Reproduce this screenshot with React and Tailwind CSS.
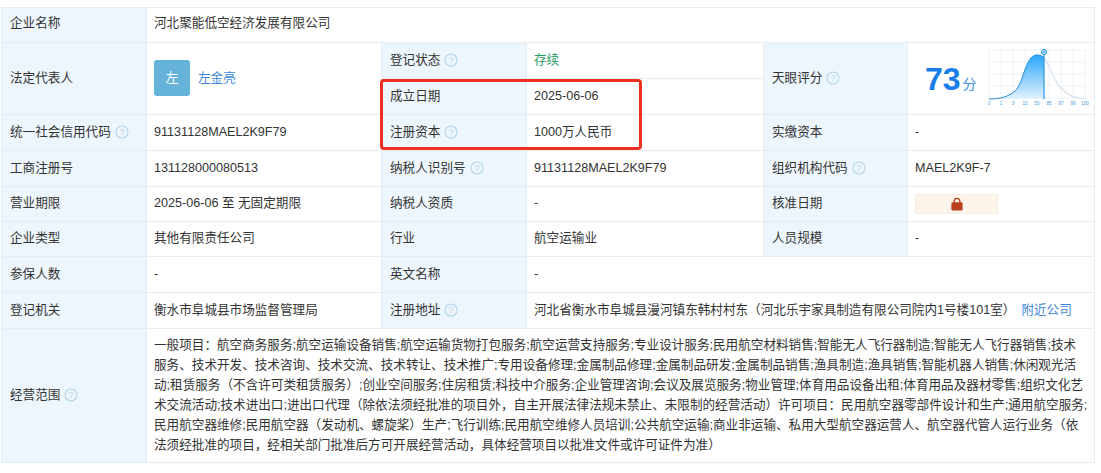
import React from 'react';

const FONT = "font-['Liberation_Sans','Noto_Sans_CJK_SC',sans-serif]";

const Help = () => (
  <svg viewBox="0 0 14 14" className="inline-block w-[14px] h-[14px] ml-[4px] align-[-3px]">
    <circle cx="7" cy="7" r="6" fill="none" stroke="#b5d5ea" strokeWidth="1.1" />
    <text x="7" y="10.2" textAnchor="middle" fontSize="9" fill="#b5d5ea" fontFamily="Liberation Sans">?</text>
  </svg>
);

const Label = ({ children, help, rowSpan, className }) => (
  <td rowSpan={rowSpan} className={`bg-[#edf6fc] border border-[#e4edf3] pl-[8px] pr-1 ${className || 'pb-[2px]'}`}>
    {children}
    {help && <Help />}
  </td>
);

const Value = ({ children, colSpan, rowSpan, className }) => (
  <td colSpan={colSpan} rowSpan={rowSpan} className={`border border-[#e4edf3] pl-[7px] pr-1 ${className || 'pb-[2px]'}`}>
    {children}
  </td>
);

const ScoreChart = () => (
  <svg width="104" height="62" viewBox="0 0 104 62" className="block">
    <defs>
      <linearGradient id="bell" x1="0" y1="0" x2="0" y2="1">
        <stop offset="0" stopColor="#2ba6fa" />
        <stop offset="1" stopColor="#e2f3fe" />
      </linearGradient>
    </defs>
    <g stroke="#eef3f8" strokeWidth="1" fill="none">
      <path d="M1 1H98M1 13H98M1 25H98M1 37H98M1 49H98" />
      <path d="M1 1V50M13 1V50M25 1V50M37 1V50M49 1V50M61 1V50M73 1V50M85 1V50M97 1V50" />
    </g>
    <path d="M1 50C12 50 20 48 27 42C36 34 37 6 49 6C53 6 56 8 56 9V50Z" fill="url(#bell)" />
    <path d="M1 50C12 50 20 48 27 42C36 34 37 6 49 6C53 6 56 8 56 9" fill="none" stroke="#1f8fe0" strokeWidth="1" />
    <path d="M56 9C62 16 65 30 72 38C79 46 88 50 98 50" fill="none" stroke="#d7e1ea" strokeWidth="1.2" />
    <path d="M56 6V50" stroke="#1f8fe0" strokeWidth="1.1" />
    <circle cx="56" cy="3" r="2.6" fill="#cfe8fb" stroke="#1f8fe0" strokeWidth="1" />
    <circle cx="56" cy="3" r="0.9" fill="#1f8fe0" />
    <g fontSize="4.5" fill="#3b9be0" textAnchor="middle" fontFamily="Liberation Sans">
      <text x="1" y="55.5">0</text>
      <text x="13" y="55.5">1</text>
      <text x="25" y="55.5">3</text>
      <text x="37" y="55.5">15</text>
      <text x="49" y="55.5">50</text>
      <text x="61" y="55.5">85</text>
      <text x="73" y="55.5">97</text>
      <text x="85" y="55.5">99</text>
      <text x="97" y="55.5">100</text>
    </g>
  </svg>
);

const scope = [
  '一般项目：航空商务服务;航空运输设备销售;航空运输货物打包服务;航空运营支持服务;专业设计服务;民用航空材料销售;智能无人飞行器制造;智能无人飞行器销售;技术',
  '服务、技术开发、技术咨询、技术交流、技术转让、技术推广;专用设备修理;金属制品修理;金属制品研发;金属制品销售;渔具制造;渔具销售;智能机器人销售;休闲观光活',
  '动;租赁服务（不含许可类租赁服务）;创业空间服务;住房租赁;科技中介服务;企业管理咨询;会议及展览服务;物业管理;体育用品设备出租;体育用品及器材零售;组织文化艺',
  '术交流活动;技术进出口;进出口代理（除依法须经批准的项目外，自主开展法律法规未禁止、未限制的经营活动）许可项目：民用航空器零部件设计和生产;通用航空服务;',
  '民用航空器维修;民用航空器（发动机、螺旋桨）生产;飞行训练;民用航空维修人员培训;公共航空运输;商业非运输、私用大型航空器运营人、航空器代管人运行业务（依',
  '法须经批准的项目，经相关部门批准后方可开展经营活动，具体经营项目以批准文件或许可证件为准）',
];

export default function App() {
  return (
    <div className={`${FONT} bg-white w-[1101px] h-[473px] pt-[7px] pl-[1px] text-[12.6px] leading-[20px] text-[#333]`}>
      <div className="relative w-[1094px]">
        <table className="w-full table-fixed border-collapse">
          <colgroup>
            <col className="w-[145px]" />
            <col className="w-[235px]" />
            <col className="w-[145px]" />
            <col className="w-[237px]" />
            <col className="w-[144px]" />
            <col />
          </colgroup>
          <tbody>
            <tr className="h-[35px]">
              <Label className="pb-[4px]">企业名称</Label>
              <Value colSpan={5} className="pb-[4px]">河北聚能低空经济发展有限公司</Value>
            </tr>
            <tr className="h-[36px]">
              <Label rowSpan={2}>法定代表人</Label>
              <Value rowSpan={2}>
                <div className="flex items-center">
                  <div className="w-[36px] h-[36px] rounded-[3px] bg-[#65b3da] text-white flex items-center justify-center text-[13px]">左</div>
                  <span className="ml-[8px] text-[#3b86d9]">左金亮</span>
                </div>
              </Value>
              <Label help>登记状态</Label>
              <Value><span className="text-[#1f9d63]">存续</span></Value>
              <Label rowSpan={2} help>天眼评分</Label>
              <Value rowSpan={2} className="pb-0">
                <div className="flex items-center pl-[10px]">
                  <span className="text-[32px] leading-[40px] font-bold text-[#1a7eea] font-['Liberation_Sans',sans-serif]">73</span>
                  <span className="ml-[2px] mt-[10px] text-[14px] text-[#3b8fe0]">分</span>
                  <div className="ml-[11px] mt-[2px]"><ScoreChart /></div>
                </div>
              </Value>
            </tr>
            <tr className="h-[36px]">
              <Label>成立日期</Label>
              <Value>2025-06-06</Value>
            </tr>
            <tr className="h-[36px]">
              <Label help>统一社会信用代码</Label>
              <Value>91131128MAEL2K9F79</Value>
              <Label help>注册资本</Label>
              <Value>1000万人民币</Value>
              <Label>实缴资本</Label>
              <Value>-</Value>
            </tr>
            <tr className="h-[36px]">
              <Label>工商注册号</Label>
              <Value>131128000080513</Value>
              <Label help>纳税人识别号</Label>
              <Value>91131128MAEL2K9F79</Value>
              <Label help>组织机构代码</Label>
              <Value>MAEL2K9F-7</Value>
            </tr>
            <tr className="h-[35px]">
              <Label>营业期限</Label>
              <Value>2025-06-06 至 无固定期限</Value>
              <Label>纳税人资质</Label>
              <Value>-</Value>
              <Label>核准日期</Label>
              <Value className="pb-0">
                <div className="w-[83px] h-[20px] rounded-[2px] border border-[#faeadf] bg-[repeating-linear-gradient(120deg,#fdf4ec,#fdf4ec_8px,#fbede2_8px,#fbede2_9px)] flex items-center justify-center">
                  <svg viewBox="0 0 12 12" className="w-[14px] h-[14px]">
                    <path d="M3.6 5V3.6a2.4 2.4 0 0 1 4.8 0V5" fill="none" stroke="#b8401c" strokeWidth="1.2" />
                    <rect x="1.2" y="4.6" width="9.6" height="7" rx="1.2" fill="#b8401c" />
                  </svg>
                </div>
              </Value>
            </tr>
            <tr className="h-[35px]">
              <Label>企业类型</Label>
              <Value>其他有限责任公司</Value>
              <Label>行业</Label>
              <Value>航空运输业</Value>
              <Label>人员规模</Label>
              <Value>-</Value>
            </tr>
            <tr className="h-[36px]">
              <Label>参保人数</Label>
              <Value>-</Value>
              <Label>英文名称</Label>
              <Value colSpan={3}>-</Value>
            </tr>
            <tr className="h-[36px]">
              <Label>登记机关</Label>
              <Value>衡水市阜城县市场监督管理局</Value>
              <Label help>注册地址</Label>
              <Value colSpan={3}>
                河北省衡水市阜城县漫河镇东韩村村东（河北乐宇家具制造有限公司院内1号楼101室）
                <span className="ml-[6px] text-[#3b86d9]">附近公司</span>
              </Value>
            </tr>
            <tr className="h-[134px]">
              <Label help>经营范围</Label>
              <Value colSpan={5}>
                <div className="whitespace-nowrap">
                  {scope.map((line) => (
                    <div key={line}>{line}</div>
                  ))}
                </div>
              </Value>
            </tr>
          </tbody>
        </table>
        <div className="absolute left-[379px] top-[72px] w-[262px] h-[71px] border-[3px] border-[#ee2f24] rounded-[4px] pointer-events-none" />
      </div>
    </div>
  );
}
